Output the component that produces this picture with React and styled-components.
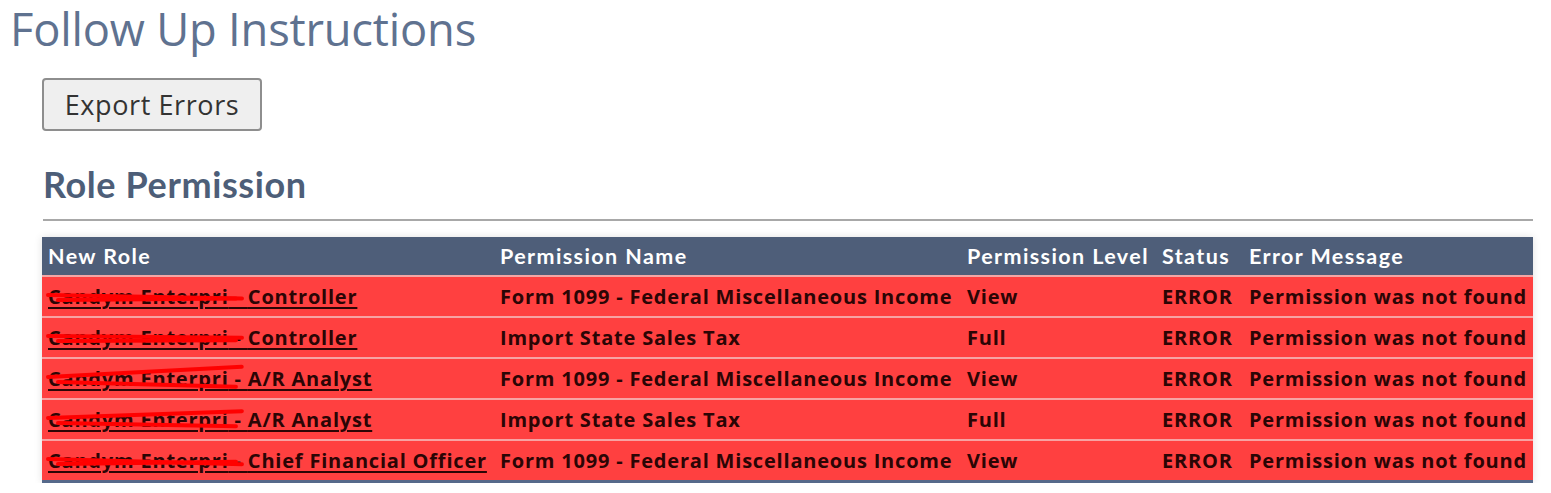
import React from 'react';
import styled, { createGlobalStyle } from 'styled-components';

const GlobalStyle = createGlobalStyle`
  body {
    margin: 0;
    background: #ffffff;
    font-family: "Open Sans", "Liberation Sans", sans-serif;
  }
`;

const Page = styled.div`
  padding: 2px 18px 0 10px;
`;

const Title = styled.h1`
  margin: 0;
  font-family: "Open Sans", sans-serif;
  font-weight: 400;
  font-size: 45.3px;
  line-height: 54px;
  color: #5f7290;
  letter-spacing: -0.2px;
`;

const Section = styled.div`
  padding-left: 32px;
`;

const ExportButton = styled.button`
  margin-top: 22px;
  width: 220px;
  height: 53px;
  background: #efefef;
  border: 2px solid #8e8e8e;
  border-radius: 4px;
  font-family: "Open Sans", sans-serif;
  font-size: 27px;
  letter-spacing: 0.6px;
  color: #333333;
  padding: 0;
`;

const SectionTitle = styled.h2`
  margin: 32px 0 0 1px;
  font-family: Lato, sans-serif;
  font-weight: 700;
  font-size: 36px;
  line-height: 42px;
  letter-spacing: 0.6px;
  color: #4d5e78;
  padding-bottom: 14px;
  border-bottom: 2px solid #a8a8a8;
`;

const Table = styled.table`
  margin-top: 16px;
  width: 1491px;
  table-layout: fixed;
  border-collapse: collapse;
  box-shadow: 0 0 8px rgba(0, 0, 0, 0.12);
  border-bottom: 3px solid #56698a;
`;

const HeadCell = styled.th`
  background: #4e5e79;
  color: #ffffff;
  font-family: Lato, sans-serif;
  font-weight: 700;
  font-size: 21.5px;
  text-align: left;
  height: 38px;
  padding: 0 6px;
  white-space: nowrap;
  letter-spacing: 1.4px;
  border-bottom: 2px solid #f2a6a6;
`;

const Row = styled.tr`
  background: #ff4040;
  border-top: ${(p) => (p.$first ? '0' : '2px solid #f7a3a3')};
`;

const Cell = styled.td`
  height: 39px;
  padding: 0 6px;
  color: #2b0505;
  font-family: "Open Sans", sans-serif;
  font-weight: 700;
  font-size: 20px;
  white-space: nowrap;
  overflow: hidden;
  letter-spacing: 0.8px;
`;

const RoleLink = styled.a`
  color: #2b0505;
  text-decoration: underline;
  text-decoration-thickness: 2px;
  text-underline-offset: 3px;
`;

const Redacted = styled.span`
  position: relative;

  &::before,
  &::after {
    content: '';
    position: absolute;
    left: -2px;
    width: 198px;
    height: 4px;
    border-radius: 2px;
    background: #ff0000;
  }
  &::before {
    top: 10px;
    transform: rotate(${(p) => p.$tilt}deg);
    transform-origin: left center;
  }
  &::after {
    top: 15px;
    left: 8px;
    width: 182px;
    transform: rotate(${(p) => -p.$tilt / 2}deg);
    transform-origin: left center;
  }
`;

const rows = [
  { role: 'Controller', perm: 'Form 1099 - Federal Miscellaneous Income', level: 'View', tilt: 1 },
  { role: 'Controller', perm: 'Import State Sales Tax', level: 'Full', tilt: 0.5 },
  { role: 'A/R Analyst', perm: 'Form 1099 - Federal Miscellaneous Income', level: 'View', tilt: -3 },
  { role: 'A/R Analyst', perm: 'Import State Sales Tax', level: 'Full', tilt: -2 },
  { role: 'Chief Financial Officer', perm: 'Form 1099 - Federal Miscellaneous Income', level: 'View', tilt: 1.5 },
];

export default function App() {
  return (
    <>
      <GlobalStyle />
      <Page>
        <Title>Follow Up Instructions</Title>
        <Section>
          <ExportButton>Export Errors</ExportButton>
          <SectionTitle>Role Permission</SectionTitle>
          <Table>
            <colgroup>
              <col style={{ width: 452 }} />
              <col style={{ width: 467 }} />
              <col style={{ width: 195 }} />
              <col style={{ width: 87 }} />
              <col style={{ width: 290 }} />
            </colgroup>
            <thead>
              <tr>
                <HeadCell>New Role</HeadCell>
                <HeadCell>Permission Name</HeadCell>
                <HeadCell>Permission Level</HeadCell>
                <HeadCell>Status</HeadCell>
                <HeadCell>Error Message</HeadCell>
              </tr>
            </thead>
            <tbody>
              {rows.map((r, i) => (
                <Row key={i} $first={i === 0}>
                  <Cell>
                    <RoleLink href="#">
                      <Redacted $tilt={r.tilt}>Candym Enterpri</Redacted> - {r.role}
                    </RoleLink>
                  </Cell>
                  <Cell>{r.perm}</Cell>
                  <Cell>{r.level}</Cell>
                  <Cell>ERROR</Cell>
                  <Cell>Permission was not found</Cell>
                </Row>
              ))}
            </tbody>
          </Table>
        </Section>
      </Page>
    </>
  );
}
